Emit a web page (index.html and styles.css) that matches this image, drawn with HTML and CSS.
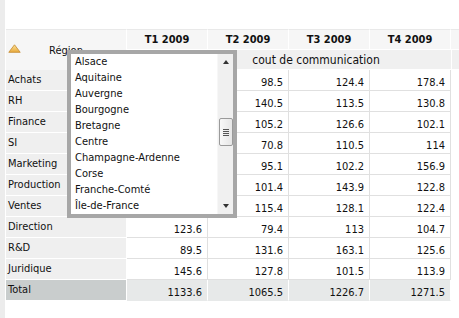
FILE: index.html
```html
<!DOCTYPE html>
<html lang="fr">
<head>
<meta charset="utf-8">
<title>Coût de communication</title>
<link rel="stylesheet" href="styles.css">
</head>
<body>
<div class="page">
  <table class="grid">
    <colgroup>
      <col class="c-label"><col class="c-num"><col class="c-num"><col class="c-num"><col class="c-num"><col class="c-extra">
    </colgroup>
    <thead>
      <tr class="h1">
        <th class="region" rowspan="2">
          <span class="sort-icon"><svg width="13" height="9" viewBox="0 0 13 9"><defs><linearGradient id="tg" x1="0" y1="0" x2="0" y2="1"><stop offset="0" stop-color="#fbe39a"/><stop offset="1" stop-color="#e9a93a"/></linearGradient></defs><path d="M6.5 0.8 L12.2 8.3 L0.8 8.3 Z" fill="url(#tg)" stroke="#c9923a" stroke-width="0.9" stroke-linejoin="round"/></svg></span>
          Région
        </th>
        <th class="period">T1 2009</th>
        <th class="period">T2 2009</th>
        <th class="period">T3 2009</th>
        <th class="period">T4 2009</th>
        <th class="period extra"></th>
      </tr>
      <tr class="h2">
        <th class="measure" colspan="4">cout de communication</th>
        <th class="measure extra"></th>
      </tr>
    </thead>
    <tbody>
      <tr><td class="lbl">Achats</td><td class="num">123.5</td><td class="num">98.5</td><td class="num">124.4</td><td class="num">178.4</td><td class="pad"></td></tr>
      <tr><td class="lbl">RH</td><td class="num">110.2</td><td class="num">140.5</td><td class="num">113.5</td><td class="num">130.8</td><td class="pad"></td></tr>
      <tr><td class="lbl">Finance</td><td class="num">96.4</td><td class="num">105.2</td><td class="num">126.6</td><td class="num">102.1</td><td class="pad"></td></tr>
      <tr><td class="lbl">SI</td><td class="num">101.8</td><td class="num">70.8</td><td class="num">110.5</td><td class="num">114</td><td class="pad"></td></tr>
      <tr><td class="lbl">Marketing</td><td class="num">88.7</td><td class="num">95.1</td><td class="num">102.2</td><td class="num">156.9</td><td class="pad"></td></tr>
      <tr><td class="lbl">Production</td><td class="num">117.4</td><td class="num">101.4</td><td class="num">143.9</td><td class="num">122.8</td><td class="pad"></td></tr>
      <tr><td class="lbl">Ventes</td><td class="num">136.9</td><td class="num">115.4</td><td class="num">128.1</td><td class="num">122.4</td><td class="pad"></td></tr>
      <tr><td class="lbl">Direction</td><td class="num">123.6</td><td class="num">79.4</td><td class="num">113</td><td class="num">104.7</td><td class="pad"></td></tr>
      <tr><td class="lbl">R&amp;D</td><td class="num">89.5</td><td class="num">131.6</td><td class="num">163.1</td><td class="num">125.6</td><td class="pad"></td></tr>
      <tr><td class="lbl">Juridique</td><td class="num">145.6</td><td class="num">127.8</td><td class="num">101.5</td><td class="num">113.9</td><td class="pad"></td></tr>
      <tr class="total"><td class="lbl">Total</td><td class="num">1133.6</td><td class="num">1065.5</td><td class="num">1226.7</td><td class="num">1271.5</td><td class="pad"></td></tr>
    </tbody>
  </table>

  <div class="dropdown">
    <ul class="options">
      <li>Alsace</li>
      <li>Aquitaine</li>
      <li>Auvergne</li>
      <li>Bourgogne</li>
      <li>Bretagne</li>
      <li>Centre</li>
      <li>Champagne-Ardenne</li>
      <li>Corse</li>
      <li>Franche-Comté</li>
      <li>Île-de-France</li>
    </ul>
    <div class="scrollbar">
      <span class="arrow up"></span>
      <span class="track-top"></span>
      <span class="thumb"><i></i><i></i><i></i><i></i></span>
      <span class="track-bottom"></span>
      <span class="arrow down"></span>
    </div>
  </div>
</div>
</body>
</html>
```
FILE: styles.css
```css
* { box-sizing: border-box; }
html, body { margin: 0; padding: 0; background: #fff; }
body {
  font-family: "DejaVu Sans Condensed", "DejaVu Sans", sans-serif;
  font-size: 11px;
  color: #111;
}
.page {
  position: relative;
  width: 459px;
  height: 318px;
  overflow: hidden;
  border-left: 5px solid #ececec;
  padding: 29px 0 0 1px;
}
.grid {
  border-collapse: separate;
  border-spacing: 0;
  table-layout: fixed;
  width: 480px;
}
.c-label { width: 121px; }
.c-num { width: 81px; }
.c-extra { width: 35px; }

.grid th, .grid td { padding: 0; }

.h1 th {
  height: 20px;
  background: #f6f6f6;
  border-top: 1px solid #e9e9e9;
  border-right: 1px solid #fff;
  font-weight: bold;
  text-align: center;
  vertical-align: middle;
}
.h1 th.region {
  font-weight: normal;
  text-align: center;
  position: relative;
  border-right: 1px solid #fff;
}
.sort-icon {
  position: absolute;
  left: 2px;
  top: 14px;
  width: 13px;
  height: 9px;
  line-height: 0;
}
.h2 th {
  height: 21px;
  background: #f0f0f0;
  border-top: 1px solid #fff;
  border-bottom: 1px solid #fff;
  font-weight: normal;
  text-align: center;
  vertical-align: middle;
  font-size: 12px;
}
.h2 th.measure { padding-left: 54px; }
.h2 th.extra { border-left: 1px solid #fff; padding-left: 0; }

.grid td { height: 21px; }
.lbl {
  background: #efefef;
  border-right: 1px solid #fff;
  border-bottom: 1px solid #fff;
  padding: 3px 0 0 2px !important;
  vertical-align: top;
  white-space: nowrap;
}
.num {
  background: #fff;
  border-right: 1px solid #e0e0e0;
  border-bottom: 1px solid #e0e0e0;
  text-align: right;
  padding: 5px 5px 0 0 !important;
  vertical-align: middle;
}
.pad { background: #fff; }
.total .lbl { background: #c9cdcd; }
.total .num { background: #e7e9e9; border-bottom-color: #e7e9e9; border-right-color: #fff; }

.dropdown {
  position: absolute;
  left: 62px;
  top: 50px;
  width: 170px;
  height: 168px;
  border: 4px solid #a7a7a7;
  background: #fff;
  display: flex;
}
.options {
  list-style: none;
  margin: 0;
  padding: 0 0 0 4px;
  flex: 1;
}
.options li {
  height: 16px;
  line-height: 16px;
  white-space: nowrap;
  color: #111;
}
.scrollbar {
  width: 16px;
  background: #f0f0f0;
  border-left: 1px solid #f7f7f7;
  display: flex;
  flex-direction: column;
  align-items: center;
}
.arrow {
  width: 0;
  height: 0;
  border-left: 3.5px solid transparent;
  border-right: 3.5px solid transparent;
}
.arrow.up { border-bottom: 4px solid #333; margin-top: 6px; }
.arrow.down { border-top: 4px solid #333; margin-bottom: 6px; }
.track-top { height: 54px; }
.track-bottom { flex: 1; }
.thumb {
  width: 14px;
  height: 28px;
  border: 1px solid #9a9a9a;
  border-radius: 2px;
  background: linear-gradient(to right, #f8f8f8, #e6e6e6);
  display: flex;
  flex-direction: column;
  align-items: center;
  justify-content: center;
  gap: 1px;
}
.thumb i {
  display: block;
  width: 6px;
  height: 1px;
  background: #555;
}
```
